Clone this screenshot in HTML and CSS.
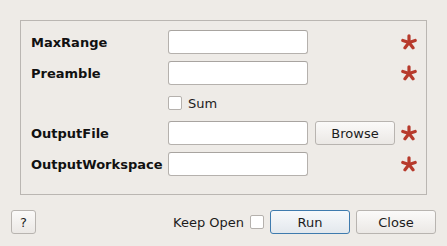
FILE: index.html
```html
<!DOCTYPE html>
<html lang="en">
<head>
    <meta charset="UTF-8">
    <title>Algorithm Dialog</title>
    <link rel="stylesheet" href="styles.css">
</head>
<body>

<div class="dialog">
    <div class="group-box">
        <div class="field-grid">
            <label class="field-label">MaxRange</label>
            <input class="text-input" type="text">
            <span></span>
            <svg class="required" viewBox="0 0 16 16"><use href="#star"/></svg>

            <label class="field-label">Preamble</label>
            <input class="text-input" type="text">
            <span></span>
            <svg class="required" viewBox="0 0 16 16"><use href="#star"/></svg>

            <span></span>
            <div class="check-row"><span class="checkbox"></span>Sum</div>
            <span></span>
            <span></span>

            <label class="field-label">OutputFile</label>
            <input class="text-input" type="text">
            <button class="btn browse">Browse</button>
            <svg class="required" viewBox="0 0 16 16"><use href="#star"/></svg>

            <label class="field-label">OutputWorkspace</label>
            <input class="text-input" type="text">
            <span></span>
            <svg class="required" viewBox="0 0 16 16"><use href="#star"/></svg>
        </div>
    </div>

    <div class="footer">
        <button class="btn help">?</button>
        <div class="footer-right">
            <span class="keep-open">Keep Open</span>
            <span class="checkbox"></span>
            <button class="btn run">Run</button>
            <button class="btn close">Close</button>
        </div>
    </div>
</div>

<svg width="0" height="0" style="position:absolute">
    <defs>
        <g id="star" stroke="#b73a2c" stroke-width="3.2" stroke-linecap="round">
            <line x1="8" y1="8.5" x2="8" y2="1.8"/>
            <line x1="8" y1="8.5" x2="14.2" y2="6.5"/>
            <line x1="8" y1="8.5" x2="12" y2="13.8"/>
            <line x1="8" y1="8.5" x2="4" y2="13.8"/>
            <line x1="8" y1="8.5" x2="1.8" y2="6.5"/>
        </g>
    </defs>
</svg>

</body>
</html>
```

FILE: styles.css
```css
/* Window */
body {
    margin: 0;
    background: #eeebe7;
    font-family: "DejaVu Sans", sans-serif;
    font-size: 13px;
    color: #1c1c1c;
}

.dialog {
    padding: 20px 0 0 20px;
}

/* Group box with the properties */
.group-box {
    width: 405px;
    height: 173px;
    border: 1px solid #bab6b2;
    box-sizing: content-box;
}

.field-grid {
    display: grid;
    grid-template-columns: 130px 140px 80px 16px;
    grid-template-rows: 24px 24px 22px 24px 24px;
    column-gap: 7px;
    row-gap: 7px;
    padding: 9px 0 0 10px;
    align-items: center;
}

.field-label {
    font-weight: bold;
    color: #111;
}

.text-input {
    box-sizing: border-box;
    width: 140px;
    height: 24px;
    margin: 0;
    border: 1px solid #b5b1ad;
    border-top-color: #a8a4a0;
    border-radius: 3px;
    background: #fff;
}

.required {
    width: 16px;
    height: 16px;
    margin-left: -1px;
}

.check-row {
    display: flex;
    align-items: center;
    gap: 6px;
}

.checkbox {
    box-sizing: border-box;
    display: inline-block;
    width: 14px;
    height: 14px;
    border: 1px solid #b5b1ad;
    border-radius: 2px;
    background: #fff;
}

/* Buttons */
.btn {
    box-sizing: border-box;
    height: 24px;
    margin: 0;
    padding: 0;
    border: 1px solid #b8b4b0;
    border-radius: 3px;
    background: linear-gradient(#fbfaf9, #ebe8e5);
    font-family: "DejaVu Sans", sans-serif;
    font-size: 13px;
    color: #1c1c1c;
}

.browse {
    width: 80px;
}

.footer {
    display: flex;
    justify-content: space-between;
    align-items: center;
    margin-top: 15px;
    padding: 0 11px 0 11px;
    margin-left: -20px;
}

.help {
    width: 25px;
}

.footer-right {
    display: flex;
    align-items: center;
}

.keep-open {
    margin-right: 6px;
}

.run {
    width: 80px;
    margin-left: 6px;
    border-color: #3f7bae;
    background: linear-gradient(#f7f9fb, #e3e8ed);
}

.close {
    width: 80px;
    margin-left: 6px;
}
```
